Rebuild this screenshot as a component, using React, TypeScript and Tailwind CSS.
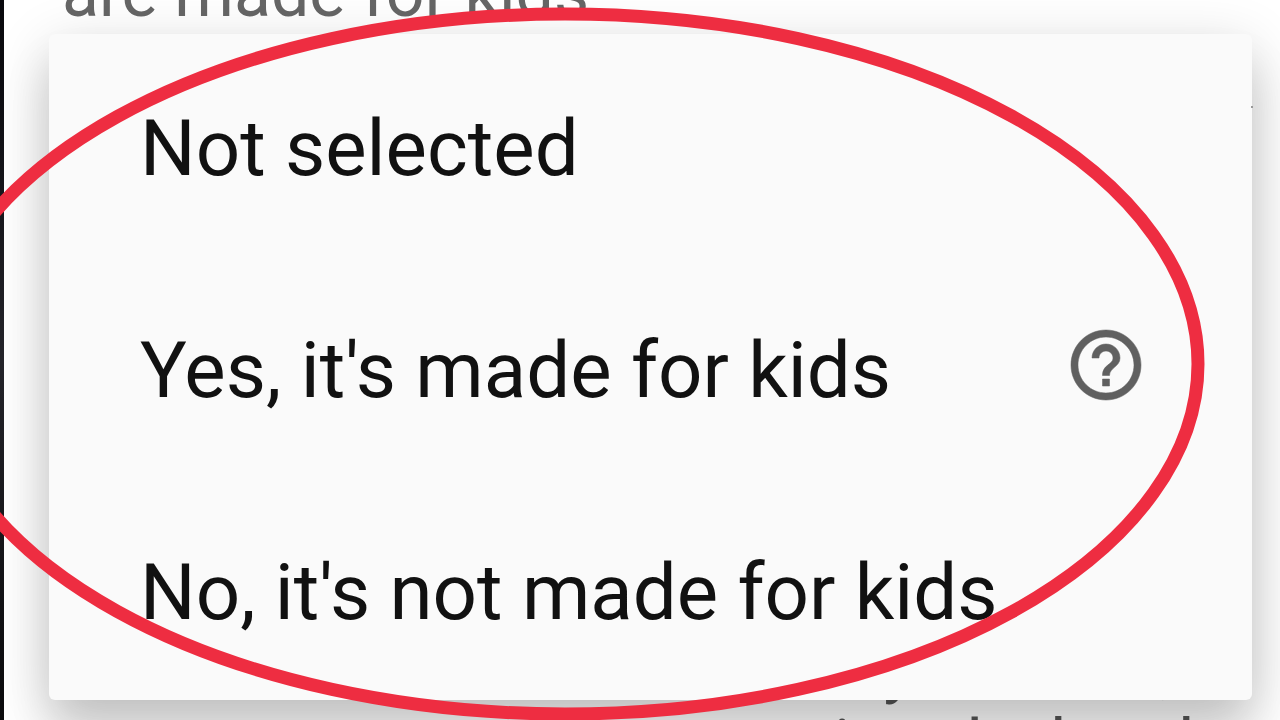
type Option = {
    key: string,
    label: string,
    help?: boolean,
}

const options: Option[] = [
    {key: "none", label: "Not selected"},
    {key: "yes", label: "Yes, it's made for kids", help: true},
    {key: "no", label: "No, it's not made for kids"},
]

function HelpIcon() {
    return (
        <svg viewBox="0 0 24 24" className="size-[84px]" fill="currentColor" stroke="currentColor" strokeWidth="0.15" aria-hidden="true">
            <path d="M11 18h2v-2h-2v2zm1-16C6.48 2 2 6.48 2 12s4.48 10 10 10 10-4.48 10-10S17.52 2 12 2zm0 18c-4.41 0-8-3.59-8-8s3.59-8 8-8 8 3.59 8 8-3.59 8-8 8zm0-14c-2.21 0-4 1.79-4 4h2c0-1.1.9-2 2-2s2 .9 2 2c0 2-3 1.75-3 5h2c0-2.25 3-2.5 3-5 0-2.21-1.79-4-4-4z"/>
        </svg>
    )
}

function OptionRow({option}: { option: Option }) {
    return (
        <li className="flex h-[222px] items-center justify-between pr-[104px] pb-1 pl-[91px]">
            <button type="button" className="pt-3 text-left whitespace-nowrap">{option.label}</button>
            {option.help && (
                <button type="button" aria-label="Help" className="text-[#606060]">
                    <HelpIcon/>
                </button>
            )}
        </li>
    )
}

export default function App() {
    return (
        <div className="relative flex h-screen overflow-hidden bg-white font-['Roboto',sans-serif]">
            <div className="w-1 shrink-0 bg-linear-to-b from-[#08080c] via-[#25252b] to-[#0b0b0d]"/>

            <main className="min-w-0 flex-1">
                <p className="-mt-[46px] pl-[58px] text-[68px] leading-[78px] text-[#666666]">are made for kids.</p>

                <ul className="relative mt-0.5 mr-7 ml-[45px] rounded-md bg-[#fafafa] text-[78px] leading-[92px] text-[#111111] shadow-[0_36px_48px_rgba(0,0,0,0.14),0_12px_56px_rgba(0,0,0,0.16)]">
                    {options.map((option) => (
                        <OptionRow key={option.key} option={option}/>
                    ))}
                    <li className="absolute top-[72px] -right-px size-0.5 bg-[#999999]" aria-hidden="true"/>
                </ul>

                {/* the rest of the page runs on underneath the menu */}
                <div className="-mt-[72px] flex flex-col items-end pr-7 text-[68px] leading-[78px] whitespace-nowrap text-[#555555]">
                    <p className="pr-20">your own,</p>
                    <p>restricted when he</p>
                </div>
            </main>

            {/* hand drawn marker around the menu */}
            <svg viewBox="0 0 1280 720" className="pointer-events-none absolute inset-0 size-full" fill="none" aria-hidden="true">
                <ellipse cx="565" cy="364" rx="633" ry="350" stroke="#ee2d41" strokeWidth="13"/>
            </svg>
        </div>
    )
}
